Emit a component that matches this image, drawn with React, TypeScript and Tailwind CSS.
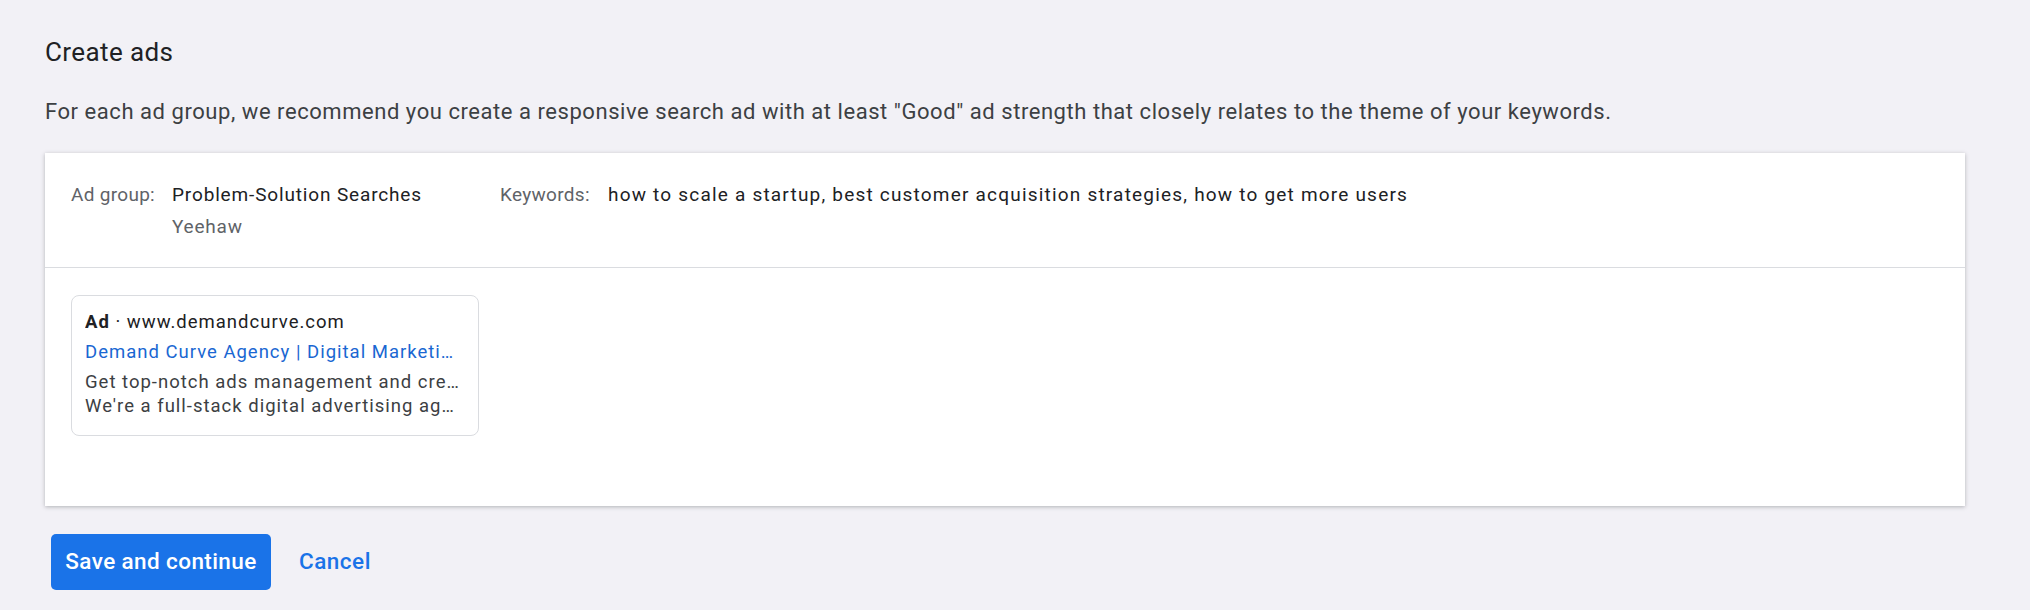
import React from "react";

export default function App() {
  return (
    <div className="min-h-[610px] w-full bg-[#f2f1f6] pl-[45px] pr-[65px] pt-[36px] font-['Roboto',_sans-serif]">
      <h1 className="text-[26px] leading-[32px] tracking-[0.4px] text-[#202124]">Create ads</h1>
      <p className="mt-[30px] text-[22px] leading-[28px] tracking-[0.55px] text-[#3c4043]">
        For each ad group, we recommend you create a responsive search ad with at least "Good" ad strength that closely relates to the theme of your keywords.
      </p>
      <div className="mt-[27px] bg-white shadow-[0_1px_4px_rgba(60,64,67,0.35)]">
        <div className="flex pl-[26px] pt-[27px] pb-[25px] text-[19px] leading-[30px]">
          <div className="flex w-[429px] shrink-0">
            <span className="w-[101px] shrink-0 tracking-[0.3px] text-[#5f6368]">Ad group:</span>
            <div className="flex flex-col">
              <span className="tracking-[0.85px] text-[#202124]">Problem-Solution Searches</span>
              <span className="mt-[2px] tracking-[0.8px] text-[#5f6368]">Yeehaw</span>
            </div>
          </div>
          <div className="flex">
            <span className="w-[108px] shrink-0 tracking-[0.3px] text-[#5f6368]">Keywords:</span>
            <span className="tracking-[1.2px] text-[#202124]">
              how to scale a startup, best customer acquisition strategies, how to get more users
            </span>
          </div>
        </div>
        <div className="border-t border-[#dadce0] pl-[26px] pt-[27px] pb-[70px]">
          <div className="w-[408px] rounded-[8px] border border-[#dadce0] pl-[13px] pr-[14px] pt-[11px] pb-[17px] text-[18.5px] tracking-[1px]">
            <div className="truncate leading-[30px] text-[#202124]">
              <span className="font-bold">Ad</span> · www.demandcurve.com
            </div>
            <div className="truncate leading-[30px] text-[#1a67d2]">
              Demand Curve Agency | Digital Marketing Agency
            </div>
            <div className="mt-[3px] truncate leading-[24px] text-[#3c4043]">
              Get top-notch ads management and creative from experts.
            </div>
            <div className="truncate leading-[24px] text-[#3c4043]">
              We're a full-stack digital advertising agency for startups.
            </div>
          </div>
        </div>
      </div>
      <div className="mt-[28px] flex items-center">
        <button className="ml-[6px] h-[56px] w-[220px] rounded-[5px] bg-[#1a73e8] text-[22.5px] font-medium tracking-[0.4px] text-white">
          Save and continue
        </button>
        <button className="ml-[28px] text-[22.5px] font-medium tracking-[0.5px] text-[#1a73e8]">Cancel</button>
      </div>
    </div>
  );
}
